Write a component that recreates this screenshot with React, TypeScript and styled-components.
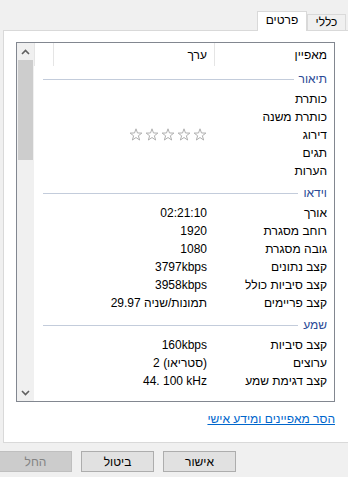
import React from "react";
import styled, { createGlobalStyle } from "styled-components";

const Global = createGlobalStyle`
  html, body { margin: 0; padding: 0; background: #f0f0f0; }
  body {
    font-family: "Liberation Sans", Arial, sans-serif;
    font-size: 12px;
    color: #000;
  }
`;

const Dialog = styled.div`
  width: 348px;
  height: 477px;
  overflow: hidden;
  direction: rtl;
  display: flex;
  flex-direction: column;
  background: #f0f0f0;
`;

const TabStrip = styled.div`
  height: 30px;
  display: flex;
  align-items: flex-end;
  padding-right: 2px;
`;

const Tab = styled.div<{ $active?: boolean }>`
  position: relative;
  z-index: ${(p) => (p.$active ? 1 : 0)};
  box-sizing: border-box;
  width: ${(p) => (p.$active ? 50 : 39)}px;
  height: ${(p) => (p.$active ? 20 : 16)}px;
  margin-bottom: ${(p) => (p.$active ? -1 : 0)}px;
  background: ${(p) => (p.$active ? "#fff" : "#f0f0f0")};
  border: 1px solid #d9d9d9;
  border-bottom: none;
  display: flex;
  justify-content: center;
  padding-top: ${(p) => (p.$active ? 2 : 1)}px;
  line-height: 13px;
`;

const Panel = styled.div`
  box-sizing: border-box;
  height: 413px;
  margin-left: 3px;
  margin-right: -2px;
  background: #fff;
  border: 1px solid #d9d9d9;
  padding: 11px 14px 0 12px;
  display: flex;
  flex-direction: column;
`;

const ListBox = styled.div`
  box-sizing: border-box;
  height: 360px;
  border: 1px solid #828790;
  display: flex;
  overflow: hidden;
`;

const Content = styled.div`
  flex: 1;
  overflow: hidden;
  display: flex;
  flex-direction: column;
`;

const HeaderRow = styled.div`
  flex: none;
  height: 23px;
  display: flex;
`;

const HeaderCell = styled.div<{ $w?: number }>`
  box-sizing: border-box;
  width: ${(p) => (p.$w ? `${p.$w}px` : "auto")};
  flex: ${(p) => (p.$w ? "none" : "1")};
  border-left: 1px solid #e5e5e5;
  padding: 5px 7px 0 0;
  line-height: 15px;
`;

const Row = styled.div`
  flex: none;
  height: 18px;
  display: flex;
  align-items: center;
`;

const PropCell = styled.div`
  box-sizing: border-box;
  width: 120px;
  flex: none;
  padding-right: 7px;
  white-space: nowrap;
`;

/* value cell: left-to-right flex, parts laid out in visual order */
const ValueCell = styled.div`
  box-sizing: border-box;
  width: 161px;
  flex: none;
  padding-right: 7px;
  direction: ltr;
  display: flex;
  justify-content: flex-end;
  align-items: center;
  white-space: pre;
  line-height: 15px;
`;

const Part = styled.span<{ $rtl?: boolean }>`
  direction: ${(p) => (p.$rtl ? "rtl" : "ltr")};
  unicode-bidi: isolate;
  white-space: pre;
`;

const GroupRow = styled.div`
  flex: none;
  height: 24px;
  display: flex;
  align-items: center;
  padding-right: 7px;
  padding-left: 9px;
`;

const GroupTitle = styled.span`
  color: #2a4a96;
  padding-top: 1px;
`;

const GroupLine = styled.div`
  flex: 1;
  height: 1px;
  margin-right: 5px;
  margin-top: 2px;
  background: #c3ccdb;
`;

const Stars = styled.span`
  display: inline-flex;
  gap: 2px;
`;

const Scrollbar = styled.div`
  flex: none;
  width: 17px;
  background: #f0f0f0;
  display: flex;
  flex-direction: column;
`;

const ScrollButton = styled.div`
  flex: none;
  height: 17px;
  display: flex;
  align-items: center;
  justify-content: center;
`;

const Track = styled.div`
  flex: 1;
`;

const Thumb = styled.div`
  height: 100px;
  margin: 0 1px;
  background: #cdcdcd;
`;

const LinkRow = styled.div`
  margin-top: 10px;
  line-height: 15px;
`;

const Link = styled.a`
  color: #0066cc;
  text-decoration: underline;
  cursor: pointer;
`;

const ButtonRow = styled.div`
  display: flex;
  gap: 9px;
  padding-right: 112px;
  margin-top: 8px;
`;

const Button = styled.div<{ $disabled?: boolean }>`
  box-sizing: border-box;
  flex: none;
  width: 73px;
  height: 21px;
  border: 1px solid ${(p) => (p.$disabled ? "#bfbfbf" : "#adadad")};
  background: ${(p) => (p.$disabled ? "#cccccc" : "#e1e1e1")};
  color: ${(p) => (p.$disabled ? "#838383" : "#000")};
  display: flex;
  align-items: center;
  justify-content: center;
`;

const Star = () => (
  <svg width="14" height="14" viewBox="0 0 14 14">
    <polygon
      points="7,0.8 8.47,4.98 12.9,5.08 9.38,7.77 10.64,12.02 7,9.5 3.36,12.02 4.62,7.77 1.1,5.08 5.53,4.98"
      fill="#fff"
      stroke="#b0b0b0"
      strokeWidth="1"
      strokeLinejoin="round"
    />
  </svg>
);

const Chevron = ({ down }: { down?: boolean }) => (
  <svg width="9" height="6" viewBox="0 0 9 6">
    <polyline
      points={down ? "1,1 4.5,4.5 8,1" : "1,5 4.5,1.5 8,5"}
      fill="none"
      stroke="#606060"
      strokeWidth="1.6"
    />
  </svg>
);

type Item =
  | { kind: "group"; title: string }
  | { kind: "row"; prop: string; value?: React.ReactNode };

const items: Item[] = [
  { kind: "group", title: "תיאור" },
  { kind: "row", prop: "כותרת" },
  { kind: "row", prop: "כותרת משנה" },
  {
    kind: "row",
    prop: "דירוג",
    value: (
      <Stars>
        {[0, 1, 2, 3, 4].map((i) => (
          <Star key={i} />
        ))}
      </Stars>
    ),
  },
  { kind: "row", prop: "תגים" },
  { kind: "row", prop: "הערות" },
  { kind: "group", title: "וידאו" },
  { kind: "row", prop: "אורך", value: <Part>02:21:10</Part> },
  { kind: "row", prop: "רוחב מסגרת", value: <Part>1920</Part> },
  { kind: "row", prop: "גובה מסגרת", value: <Part>1080</Part> },
  { kind: "row", prop: "קצב נתונים", value: <Part>3797kbps</Part> },
  { kind: "row", prop: "קצב סיביות כולל", value: <Part>3958kbps</Part> },
  {
    kind: "row",
    prop: "קצב פריימים",
    value: (
      <>
        <Part>29.97 </Part>
        <Part $rtl>תמונות/שניה</Part>
      </>
    ),
  },
  { kind: "group", title: "שמע" },
  { kind: "row", prop: "קצב סיביות", value: <Part>160kbps</Part> },
  {
    kind: "row",
    prop: "ערוצים",
    value: (
      <>
        <Part>2 </Part>
        <Part $rtl>(סטריאו)</Part>
      </>
    ),
  },
  { kind: "row", prop: "קצב דגימת שמע", value: <Part>44. 100 kHz</Part> },
];

export default function App() {
  return (
    <>
      <Global />
      <Dialog>
        <TabStrip>
          <Tab>כללי</Tab>
          <Tab $active>פרטים</Tab>
        </TabStrip>
        <Panel>
          <ListBox>
            <Content>
              <HeaderRow>
                <HeaderCell $w={120}>מאפיין</HeaderCell>
                <HeaderCell $w={161}>ערך</HeaderCell>
                <HeaderCell />
              </HeaderRow>
              {items.map((it, i) =>
                it.kind === "group" ? (
                  <GroupRow key={i}>
                    <GroupTitle>{it.title}</GroupTitle>
                    <GroupLine />
                  </GroupRow>
                ) : (
                  <Row key={i}>
                    <PropCell>{it.prop}</PropCell>
                    <ValueCell>{it.value}</ValueCell>
                  </Row>
                )
              )}
            </Content>
            <Scrollbar>
              <ScrollButton>
                <Chevron />
              </ScrollButton>
              <Track>
                <Thumb />
              </Track>
              <ScrollButton>
                <Chevron down />
              </ScrollButton>
            </Scrollbar>
          </ListBox>
          <LinkRow>
            <Link>הסר מאפיינים ומידע אישי</Link>
          </LinkRow>
        </Panel>
        <ButtonRow>
          <Button>אישור</Button>
          <Button>ביטול</Button>
          <Button $disabled>החל</Button>
        </ButtonRow>
      </Dialog>
    </>
  );
}
